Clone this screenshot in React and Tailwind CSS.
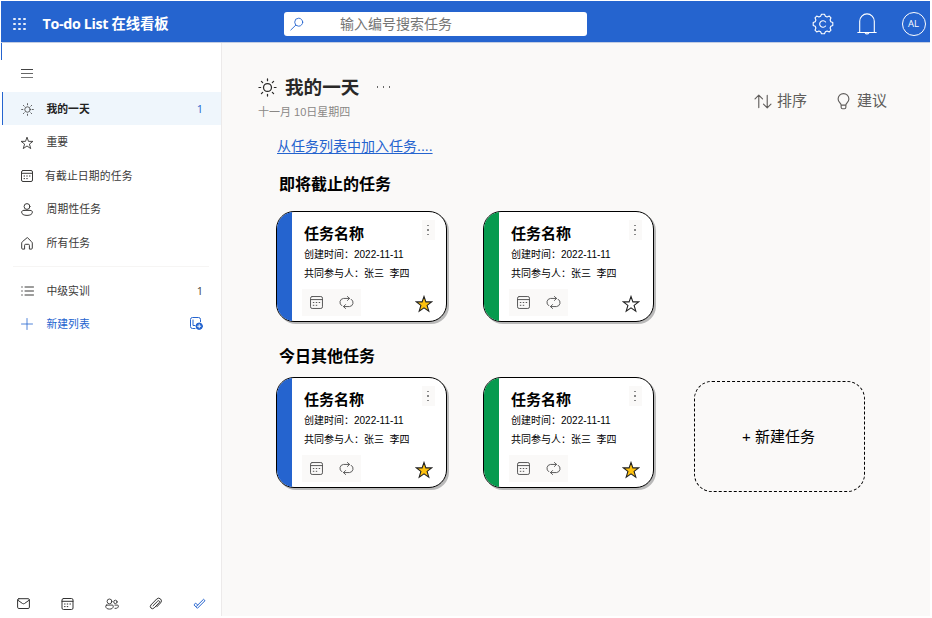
import React from "react";

function Icon({ className, box = "0 0 16 16", sw = 1, children }) {
  return (
    <svg
      className={"shrink-0 " + className}
      viewBox={box}
      fill="none"
      stroke="currentColor"
      strokeWidth={sw}
      strokeLinecap="round"
      strokeLinejoin="round"
    >
      {children}
    </svg>
  );
}

const Sun = ({ className, sw = 1 }) => (
  <Icon className={className} box="0 0 20 20" sw={sw}>
    <circle cx="10" cy="10" r="4.2" />
    <path d="M10 1v1.8M10 17.2V19M1 10h1.8M17.2 10H19M3.6 3.6l1.3 1.3M15.1 15.1l1.3 1.3M3.6 16.4l1.3-1.3M15.1 4.9l1.3-1.3" />
  </Icon>
);

const Calendar = ({ className, sw = 1 }) => (
  <Icon className={className} box="0 0 12 12" sw={sw}>
    <rect x="0.5" y="0.5" width="11" height="11" rx="1.5" />
    <path d="M0.5 3.3h11" />
    <path d="M3 6h.6M5.7 6h.6M8.4 6h.6M3 8.6h.6M5.7 8.6h.6" />
  </Icon>
);

const Repeat = ({ className }) => (
  <Icon className={className} box="0 0 14 12" sw={0.9}>
    <path d="M2.6 9A3.7 3.7 0 0 1 4.2 2.2H9.8M7.9 0.4l1.9 1.8-1.9 1.9" />
    <path d="M11.4 3A3.7 3.7 0 0 1 9.8 9.8H4.2M6.1 7.9L4.2 9.8l1.9 1.8" />
  </Icon>
);

const Star = ({ className, fill = "none", sw = 1 }) => (
  <svg className={"shrink-0 " + className} viewBox="0 0 18 18" fill={fill} stroke="currentColor" strokeWidth={sw} strokeLinejoin="miter">
    <path d="M9 1.5l1.9 5.4h5.7l-4.5 3.5 1.7 5.8L9 12.8l-4.8 3.4 1.7-5.8L1.4 6.9h5.7z" />
  </svg>
);

function NavRow({ icon, label, count, active, indent = "ml-[13px]", tone = "text-[#3b3a39]" }) {
  return (
    <div
      className={
        "ml-px flex h-[33px] items-center border-l pl-[18px] pr-[18px] pt-px text-[10.8px] " +
        (active ? "border-[#2564cf] bg-[#eff6fc] font-bold text-[#222]" : "border-transparent " + tone)
      }
    >
      <span className="-ml-[0.5px] flex w-[13px] shrink-0 justify-center">{icon}</span>
      <span className={"flex-1 whitespace-nowrap " + indent}>{label}</span>
      {count && <span className={"font-['Open_Sans'] text-[11px] font-normal " + (active ? "text-[#2564cf]" : "text-[#444]")}>{count}</span>}
    </div>
  );
}

function Dots({ className }) {
  return (
    <span className={"flex " + className}>
      <i className="h-[1.5px] w-[1.5px] bg-current" />
      <i className="h-[1.5px] w-[1.5px] bg-current" />
      <i className="h-[1.5px] w-[1.5px] bg-current" />
    </span>
  );
}

function TaskCard({ color, starred }) {
  return (
    <div className="flex h-[111px] w-[171px] overflow-hidden rounded-[18px] border border-black bg-white shadow-[2px_2px_0_#b9b9b9]">
      <div className={"w-[15px] shrink-0 " + color} />
      <div className="min-w-0 flex-1 pl-3 text-black">
        <div className="flex h-[33px] justify-between pr-[11.5px]">
          <span className="mt-[12px] whitespace-nowrap text-[15px] font-bold leading-[20px]">任务名称</span>
          <Dots className="mt-[8px] h-[20px] w-[13px] flex-col items-center justify-center gap-[3px] bg-[#faf9f8] text-[#888]" />
        </div>
        <div className="h-[19px] whitespace-pre text-[10px] leading-[19px]">创建时间：2022-11-11</div>
        <div className="h-[19px] whitespace-pre text-[10px] leading-[19px]">共同参与人：张三  李四</div>
        <div className="mt-[6px] flex items-center justify-between pr-[13.5px]">
          <div className="-ml-[2px] flex h-[27px] w-[59px] items-center gap-[16px] bg-[#faf9f8] pl-[8px] text-[#555]">
            <Calendar className="h-[13px] w-[13px]" sw={0.9} />
            <Repeat className="h-[13px] w-[15px]" />
          </div>
          <Star className="mt-[3px] h-[18px] w-[18px] text-[#222]" fill={starred ? "#ffc20e" : "none"} sw={1.1} />
        </div>
      </div>
    </div>
  );
}

function Header() {
  return (
    <header className="flex h-[42px] items-center border-b border-[#c3cde2] bg-[#2564cf] pt-[5px] text-white">
      <div className="ml-[12px] grid grid-cols-3 gap-[2.5px]">
        {Array.from({ length: 9 }, (_, i) => (
          <i key={i} className="h-[2.5px] w-[2.5px] rounded-[1px] bg-white/90" />
        ))}
      </div>
      <div className="ml-[17px] w-[241.5px] whitespace-nowrap pt-px text-[14.3px] font-bold tracking-[-0.35px]">
        <span className="font-['Open_Sans']">To-do List </span>
        <span className="tracking-normal">在线看板</span>
      </div>
      <div className="flex h-[24px] w-[303px] items-center rounded-[3px] bg-white">
        <Icon className="ml-[6px] h-[14px] w-[14px] text-[#2564cf]" box="0 0 14 14" sw={0.9}>
          <circle cx="8.7" cy="5.2" r="4" />
          <path d="M5.8 8.1L0.8 13" />
        </Icon>
        <span className="ml-[36px] pt-px text-[14px] text-[#757575]">输入编号搜索任务</span>
      </div>
      <Icon className="ml-[225px] h-[22px] w-[22px]" box="0 0 22 22" sw={1.1}>
        <path d="M9.5 1.2h3l.9 2.1 1.7.7 2.2-.9 1.7 1.7-.9 2.2.7 1.7 2 .8v3l-2 .8-.7 1.7.9 2.2-1.7 1.7-2.2-.9-1.7.7-.9 2.1h-3l-.9-2.1-1.7-.7-2.2.9L3 17.2l.9-2.2-.7-1.7-2-.8v-3l2-.8.7-1.7L3 4.8l1.7-1.7 2.2.9 1.7-.7z" />
        <path d="M13.6 9a3.3 3.3 0 1 0 0 4" />
      </Icon>
      <Icon className="ml-[23px] h-[22px] w-[20px]" box="0 0 20 22" sw={1.1}>
        <path d="M2.7 19.5V8.2a7.3 7.3 0 0 1 14.6 0v11.3M.8 19.5h18.4M8.3 20a1.8 1.3 0 0 0 3.4 0" />
      </Icon>
      <div className="ml-[24.5px] flex h-[24px] w-[24px] items-center justify-center rounded-full border border-white font-['Open_Sans'] text-[9.5px]">AL</div>
    </header>
  );
}

function Sidebar() {
  return (
    <aside className="flex w-[221px] shrink-0 flex-col border-r border-[#eceaea] bg-white">
      <div className="h-[17px] w-px bg-[#2564cf]" />
      <div className="ml-[20px] mt-[9px] flex flex-col gap-[3px]">
        <i className="h-px w-[12px] bg-[#444]" />
        <i className="h-px w-[12px] bg-[#666]" />
        <i className="h-px w-[12px] bg-[#777]" />
      </div>
      <nav className="mt-[14px] flex flex-col gap-[0.5px]">
        <NavRow active icon={<Sun className="h-[13px] w-[13px] text-[#333]" sw={1.2} />} label="我的一天" count="1" />
        <NavRow icon={<Star className="h-[14px] w-[14px]" sw={1.2} />} label="重要" />
        <NavRow icon={<Calendar className="h-[12px] w-[12px]" />} label="有截止日期的任务" indent="ml-[11.5px] tracking-[0.15px]" />
        <NavRow
          icon={
            <Icon className="h-[13px] w-[12px]" box="0 0 12 13">
              <circle cx="6" cy="3.5" r="2.9" />
              <path d="M3 7.4h6c1.5 0 2.4.7 2.4 1.7 0 2.2-2.3 3.3-5.4 3.3S.6 11.3.6 9.1C.6 8.1 1.5 7.4 3 7.4z" />
            </Icon>
          }
          label="周期性任务"
          indent="ml-[13px] tracking-[0.15px]"
        />
        <NavRow
          icon={
            <Icon className="h-[13px] w-[12px]" box="0 0 12 12">
              <path d="M6 .3L1.4 4.2Q.7 4.8.7 5.6v4.9q0 1.1 1 1.1h1.9V7.8q0-1 1-1h2.8q1 0 1 1v3.8h1.9q1 0 1-1.1V5.6q0-.8-.7-1.4z" />
            </Icon>
          }
          label="所有任务"
          indent="ml-[13px] tracking-[0.15px]"
        />
      </nav>
      <div className="mx-[12px] mt-[7px] h-px bg-[#f6f5f4]" />
      <div className="mt-[7px]">
        <NavRow
          icon={
            <Icon className="h-[12px] w-[13px]" box="0 0 13 12">
              <path d="M.7 2h.6M.7 6h.6M.7 10h.6M4 2h8.5M4 6h8.5M4 10h8.5" />
            </Icon>
          }
          label="中级实训"
          count="1"
        />
        <NavRow
          tone="text-[#2564cf]"
          icon={
            <Icon className="-mt-px h-[12px] w-[12px]" box="0 0 12 12" sw={0.8}>
              <path d="M6 .5v11M.5 6h11" />
            </Icon>
          }
          label="新建列表"
          count={
            <Icon className="-mt-px h-[13px] w-[13px] text-[#2564cf]" box="0 0 13 13">
              <path d="M5 11.5H2.5a2 2 0 0 1-2-2V2.5a2 2 0 0 1 2-2h6a2 2 0 0 1 2 2v2.3M3 3v5.5h2" />
              <circle cx="9.2" cy="9.2" r="3.2" fill="currentColor" />
              <path d="M9.2 7.6v3.2M7.6 9.2h3.2" stroke="white" />
            </Icon>
          }
        />
      </div>
      <div className="mb-[6px] mt-auto flex items-center gap-[31px] pl-[16px] text-[#333]">
        <Icon className="h-[13px] w-[13px]" box="0 0 13 13">
          <rect x=".6" y="1.7" width="11.8" height="9.8" rx="1.3" />
          <path d="M1 3.3l4.5 3.2q1 .6 2 0L12 3.3" />
        </Icon>
        <Calendar className="h-[12px] w-[13px]" />
        <Icon className="-mr-px h-[12px] w-[14px]" box="0 0 14 12" sw={0.9}>
          <circle cx="4.5" cy="3.4" r="2.4" />
          <circle cx="10.4" cy="3.9" r="1.7" />
          <path d="M1.7 7.1h5.6q1 0 1 1c0 2-1.5 3-3.8 3S.7 10.1.7 8.1q0-1 1-1zM9.9 7.1h2.5q1 0 1 1c0 1.6-1.2 2.4-3.4 2.3" />
        </Icon>
        <Icon className="h-[13px] w-[13px]" box="0 0 13 13">
          <path d="M4 8.8L8.8 4q.8-.7 1.5 0t0 1.5L5.2 10.9q-1.7 1.6-3.2.2t0-3.2L7.7 2q2.1-1.8 3.900 0t0 3.9L7.7 9.9" />
        </Icon>
        <Icon className="h-[12px] w-[13px] text-[#2564cf]" box="0 0 13 12">
          <path d="M1.2 6.5l1.5-1.4 2 2L10.5 1.3l1.5 1.4L4.7 10zM4.7 7.1L3.3 8.5" />
        </Icon>
      </div>
    </aside>
  );
}

function Main() {
  return (
    <main className="flex-1 bg-[#faf9f8] text-black">
      <div className="flex items-start pl-[36px] pr-[43px] pt-[32px]">
        <div>
          <div className="flex h-[25px] items-center text-[#292827]">
            <Sun className="-mt-px h-[19px] w-[19px]" sw={1.3} />
            <h1 className="ml-[8px] whitespace-nowrap text-[18.6px] font-bold leading-[25px]">我的一天</h1>
            <Dots className="-mt-px ml-[17.5px] gap-[4.5px] text-[#666]" />
          </div>
          <div className="h-[22px] whitespace-nowrap pt-px text-[11px] leading-[22px] text-[#8a8886]">十一月 10日星期四</div>
        </div>
        <div className="ml-auto mt-[15px] flex h-[22px] items-center text-[15px] text-[#605e5c]">
          <Icon className="h-[15px] w-[18px]" box="0 0 19 16" sw={1.2}>
            <path d="M5 14.5V1.5M1 5.3l4-4 4 4M14 1.5v13M10 10.7l4 4 4-4" />
          </Icon>
          <span className="ml-[5px]">排序</span>
          <Icon className="ml-[30px] h-[17px] w-[13px]" box="0 0 13 18" sw={1.2}>
            <path d="M4 12.8C3.8 10.8.8 9.8.8 6.3a5.7 5.7 0 0 1 11.4 0c0 3.5-3 4.5-3.2 6.5zM4 12.8v2.4q0 1.5 1.5 1.5h2q1.5 0 1.5-1.5v-2.4" />
          </Icon>
          <span className="ml-[7px]">建议</span>
        </div>
      </div>
      <section className="pl-[54px]">
        <a className="ml-[1px] mt-[13px] block h-[22px] whitespace-nowrap text-[14px] leading-[22px] text-[#2564cf] underline underline-offset-2">从任务列表中加入任务....</a>
        <h2 className="ml-[3px] mt-[16px] h-[24px] text-[16px] font-bold leading-[24px]">即将截止的任务</h2>
        <div className="mt-[14px] flex gap-[36px]">
          <TaskCard color="bg-[#2564cf]" starred />
          <TaskCard color="bg-[#069a4e]" />
        </div>
        <h2 className="ml-[3px] mt-[22px] h-[24px] pt-px text-[16px] font-bold leading-[24px]">今日其他任务</h2>
        <div className="mt-[9px] flex">
          <TaskCard color="bg-[#2564cf]" starred />
          <div className="ml-[36px]">
            <TaskCard color="bg-[#069a4e]" starred />
          </div>
          <button className="ml-[40px] mt-[4px] h-[111px] w-[171px] rounded-[18px] border border-dashed border-black pr-[2px] pt-px text-[15px]">+ 新建任务</button>
        </div>
      </section>
    </main>
  );
}

export default function App() {
  return (
    <div className="flex h-[618px] w-[932px] flex-col bg-white pb-[2px] pl-px pr-[2px] pt-px font-['Liberation_Sans','Noto_Sans_CJK_SC',sans-serif]">
      <Header />
      <div className="flex min-h-0 flex-1">
        <Sidebar />
        <Main />
      </div>
    </div>
  );
}
